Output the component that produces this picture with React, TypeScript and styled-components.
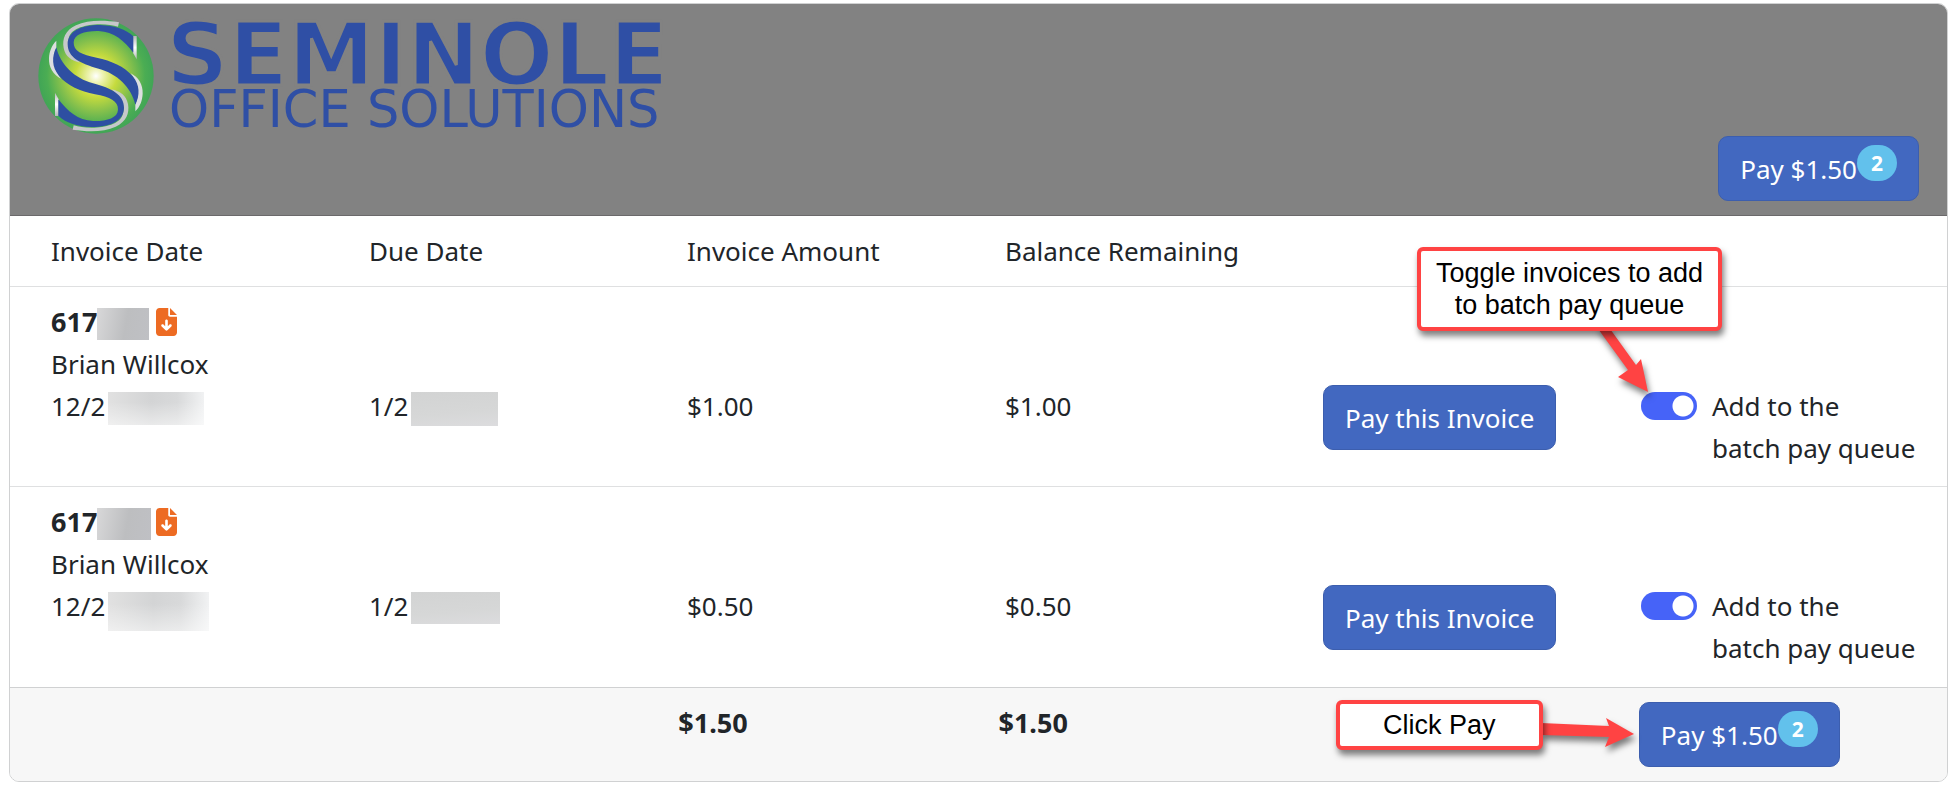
import React, { useState } from "react";
import styled, { createGlobalStyle } from "styled-components";
import { FaFileArrowDown } from "react-icons/fa6";

const GlobalStyle = createGlobalStyle`
  *, *::before, *::after { box-sizing: border-box; }
  body {
    margin: 0;
    background: #fff;
    color: #212529;
    font-family: "Noto Sans", "Open Sans", sans-serif;
    font-size: 26px;
    line-height: 42px;
  }
`;

const Page = styled.main`
  padding: 3px 9px;
`;

const Card = styled.section`
  border: 1px solid #d0d1d2;
  border-radius: 10px;
  background: #fff;
`;

const CardHeader = styled.header`
  display: flex;
  flex-direction: column;
  padding: 14px 28px;
  border-bottom: 1px solid #6b696b;
  border-radius: 9px 9px 0 0;
  background: #828282;
`;

const HeaderActions = styled.div`
  display: flex;
  justify-content: flex-end;
`;

const Button = styled.button`
  display: inline-flex;
  align-items: center;
  height: 65px;
  padding: 0 21px;
  border: 1px solid #3c5eae;
  border-radius: 10px;
  background: #4268c0;
  color: #fff;
  font: inherit;
  white-space: nowrap;
  cursor: pointer;
`;

const Badge = styled.span`
  margin-bottom: 12px;
  padding: 0 14px;
  border-radius: 18px;
  background: #62c1ec;
  font-size: 21px;
  font-weight: 700;
  line-height: 36px;
`;

const InvoiceTable = styled.table`
  display: block;
  text-align: left;
`;

const TableHead = styled.thead`
  display: block;
`;

const TableBody = styled.tbody`
  display: block;
`;

const TableFoot = styled.tfoot`
  display: block;
  border-top: 1px solid #d0d1d2;
  border-radius: 0 0 9px 9px;
  background: #f7f7f7;
`;

const Row = styled.tr`
  display: grid;
  grid-template-columns: repeat(6, minmax(0, 1fr));
  padding: 14px 2px 14px 27px;
`;

const HeadRow = styled(Row)`
  border-bottom: 1px solid #dfe0e1;
`;

const InvoiceRow = styled(Row)`
  padding-bottom: 17px;

  & + & {
    padding-bottom: 18px;
    border-top: 1px solid #dfe0e1;
  }
`;

const TotalRow = styled(Row)`
  padding-left: 14px;
  font-size: 27px;
  font-weight: 700;
`;

const HeadCell = styled.th`
  padding: 0 14px;
  font-weight: 400;
`;

const Cell = styled.td`
  padding: 0 14px;
`;

/* Lines up with the third text line of the invoice cell. */
const LowCell = styled(Cell)`
  padding-top: 84px;
`;

const Line = styled.div`
  display: flex;
  align-items: flex-start;
  height: 42px;
`;

const InvoiceNumber = styled.strong`
  display: flex;
  align-items: flex-start;
  width: 105px;
  font-size: 27px;
`;

const Redacted = styled.span<{ $w: number; $h: number; $tone: "dark" | "fade" | "flat" }>`
  width: ${(p) => p.$w}px;
  height: ${(p) => p.$h}px;
  margin-top: 7px;
  background: ${(p) =>
    p.$tone === "dark"
      ? "linear-gradient(100deg, #d8d8d9, #bdbec0 55%, #bfc0c4)"
      : p.$tone === "fade"
      ? "linear-gradient(to bottom, rgba(255,255,255,0) 30%, rgba(255,255,255,0.5)), linear-gradient(to right, #e1e1e1, #d3d4d5 45%, #d8d9da 72%, #f1f2f3)"
      : "linear-gradient(175deg, #d2d3d3, #d6d7d7 60%, #dcdcde)"};
`;

const ShortDate = styled.span<{ $w: number }>`
  width: ${(p) => p.$w}px;
`;

const DownloadLink = styled.a`
  display: flex;
  margin-top: 7px;
  color: #ed6b23;

  svg {
    width: 21px;
    height: 28px;
  }
`;

const ToggleLabel = styled.label`
  position: relative;
  display: flex;
  gap: 15px;
  align-items: flex-start;
`;

const Toggle = styled.input`
  flex: none;
  appearance: none;
  width: 56px;
  height: 28px;
  margin: 7px 0 0;
  border-radius: 14px;
  background: radial-gradient(circle at 14px 14px, #fff 10px, transparent 11px) #adb5bd;

  &:checked {
    background: radial-gradient(circle at 42px 14px, #fff 10px, transparent 11px) #4663f8;
  }
`;

const FootAction = styled.div`
  position: relative;
  display: flex;
  font-size: 26px;
  font-weight: 400;
`;

const Callout = styled.div<{ $left: number; $top: number; $width: number; $padY: number }>`
  position: absolute;
  left: ${(p) => p.$left}px;
  top: ${(p) => p.$top}px;
  width: ${(p) => p.$width}px;
  padding: ${(p) => p.$padY}px 0;
  border: 4px solid #ff4343;
  border-radius: 6px;
  background: #fff;
  box-shadow: 2px 5px 6px rgba(0, 0, 0, 0.5);
  color: #000;
  font-family: "Liberation Sans", Arial, sans-serif;
  font-size: 27px;
  line-height: 32px;
  text-align: center;
  white-space: nowrap;
`;

const Arrow = styled.svg<{ $left: number; $top: number }>`
  position: absolute;
  left: ${(p) => p.$left}px;
  top: ${(p) => p.$top}px;
  overflow: visible;
  filter: drop-shadow(2px 5px 3px rgba(0, 0, 0, 0.5));
  pointer-events: none;
`;

const LogoSvg = styled.svg`
  display: block;
  overflow: visible;
`;

function EmblemHalf() {
  return (
    <>
      <path
        d="M357 67C310 60 262 60 228 76C196 91 186 116 191 144C196 170 215 182 240 188L225 172C206 154 200 132 207 112C216 84 258 74 300 73C322 73 340 76 354 80Z"
        fill="#c6c8ca"
      />
      <path
        d="M392 220C416 232 429 254 428 281C427 302 420 320 406 334L406 312C418 292 416 250 392 220Z"
        fill="#dcdee0"
      />
      <path d="M399 108L410 108L410 178L399 158Z" fill="url(#silver)" />
      <path
        d="M400 109C378 88 345 77 300 75C240 75 203 96 203 133C203 172 240 191 296 206C350 220 395 262 406 314C420 286 420 254 398 229C372 198 335 183 290 173C245 165 220 153 221 127C222 102 255 92 296 93C342 95 372 122 400 158Z"
        fill="#2e4fa2"
      />
    </>
  );
}

function Logo() {
  return (
    <LogoSvg width="630" height="118" viewBox="0 0 630 118" role="img" aria-label="Seminole Office Solutions">
      <defs>
        <radialGradient id="globe" cx="0.5" cy="0.5" r="0.5">
          <stop offset="0" stopColor="#ffffff" />
          <stop offset="0.12" stopColor="#eef3b4" />
          <stop offset="0.36" stopColor="#c6db3e" />
          <stop offset="0.62" stopColor="#85c04c" />
          <stop offset="0.85" stopColor="#4bad53" />
          <stop offset="1" stopColor="#41a556" />
        </radialGradient>
        <linearGradient id="silver" x1="0" y1="0" x2="0" y2="1">
          <stop offset="0" stopColor="#b4b6b8" />
          <stop offset="0.5" stopColor="#ffffff" />
          <stop offset="1" stopColor="#b4b6b8" />
        </linearGradient>
      </defs>
      <svg x="0" y="0" width="116" height="116" viewBox="114 54 348 348">
        <circle cx="288" cy="228" r="173" fill="url(#globe)" />
        <EmblemHalf />
        <g transform="rotate(180 287.5 228)">
          <EmblemHalf />
        </g>
      </svg>
      <g fill="#2f4fa5" fontFamily='"DejaVu Sans", sans-serif'>
        <text x="128" y="67" fontSize="87" fontWeight="700" stroke="#828282" strokeWidth="3">
          SEMINOLE
        </text>
        <text x="131" y="109" fontSize="51">
          OFFICE SOLUTIONS
        </text>
      </g>
    </LogoSvg>
  );
}

function PayButton({ count }: { count: number }) {
  return (
    <Button type="button">
      Pay $1.50<Badge>{count}</Badge>
    </Button>
  );
}

const invoices = [
  { id: "a", amount: "$1.00", boxes: { number: [52, 32], date: [96, 33], due: [87, 34] } },
  { id: "b", amount: "$0.50", boxes: { number: [54, 32], date: [101, 39], due: [89, 32] } },
];

export default function App() {
  const [queued, setQueued] = useState<Record<string, boolean>>({ a: true, b: true });
  const count = Object.values(queued).filter(Boolean).length;

  return (
    <>
      <GlobalStyle />
      <Page>
        <Card>
          <CardHeader>
            <Logo />
            <HeaderActions>
              <PayButton count={count} />
            </HeaderActions>
          </CardHeader>
          <InvoiceTable>
            <TableHead>
              <HeadRow>
                <HeadCell>Invoice Date</HeadCell>
                <HeadCell>Due Date</HeadCell>
                <HeadCell>Invoice Amount</HeadCell>
                <HeadCell>Balance Remaining</HeadCell>
              </HeadRow>
            </TableHead>
            <TableBody>
              {invoices.map(({ id, amount, boxes }, index) => (
                <InvoiceRow key={id}>
                  <Cell>
                    <Line>
                      <InvoiceNumber>
                        617
                        <Redacted $w={boxes.number[0]} $h={boxes.number[1]} $tone="dark" />
                      </InvoiceNumber>
                      <DownloadLink href="#" aria-label="Download invoice">
                        <FaFileArrowDown />
                      </DownloadLink>
                    </Line>
                    <Line>Brian Willcox</Line>
                    <Line>
                      <ShortDate $w={57}>12/2</ShortDate>
                      <Redacted $w={boxes.date[0]} $h={boxes.date[1]} $tone="fade" />
                    </Line>
                  </Cell>
                  <LowCell>
                    <Line>
                      <ShortDate $w={42}>1/2</ShortDate>
                      <Redacted $w={boxes.due[0]} $h={boxes.due[1]} $tone="flat" />
                    </Line>
                  </LowCell>
                  <LowCell>{amount}</LowCell>
                  <LowCell>{amount}</LowCell>
                  <LowCell>
                    <Button type="button">Pay this Invoice</Button>
                  </LowCell>
                  <LowCell>
                    <ToggleLabel>
                      <Toggle
                        type="checkbox"
                        checked={queued[id]}
                        onChange={(e) => setQueued({ ...queued, [id]: e.target.checked })}
                      />
                      <span>
                        Add to the
                        <br />
                        batch pay queue
                      </span>
                      {index === 0 && (
                        <>
                          <Arrow $left={-45} $top={-59} width="54" height="66" aria-hidden="true">
                            <path d="M0 0L32 44L22 51L52 66L45 33L40 39L12 0Z" fill="#ff4343" />
                          </Arrow>
                          <Callout $left={-224} $top={-138} $width={305} $padY={6}>
                            Toggle invoices to add
                            <br />
                            to batch pay queue
                          </Callout>
                        </>
                      )}
                    </ToggleLabel>
                  </LowCell>
                </InvoiceRow>
              ))}
            </TableBody>
            <TableFoot>
              <TotalRow>
                <Cell />
                <Cell />
                <Cell>$1.50</Cell>
                <Cell>$1.50</Cell>
                <Cell />
                <Cell>
                  <FootAction>
                    <PayButton count={count} />
                    <Arrow $left={-98} $top={15} width="93" height="32" aria-hidden="true">
                      <path d="M0 6L68 9L65 1L93 17L64 30L68 20L0 18Z" fill="#ff4343" />
                    </Arrow>
                    <Callout $left={-303} $top={-2} $width={207} $padY={5}>
                      Click Pay
                    </Callout>
                  </FootAction>
                </Cell>
              </TotalRow>
            </TableFoot>
          </InvoiceTable>
        </Card>
      </Page>
    </>
  );
}
